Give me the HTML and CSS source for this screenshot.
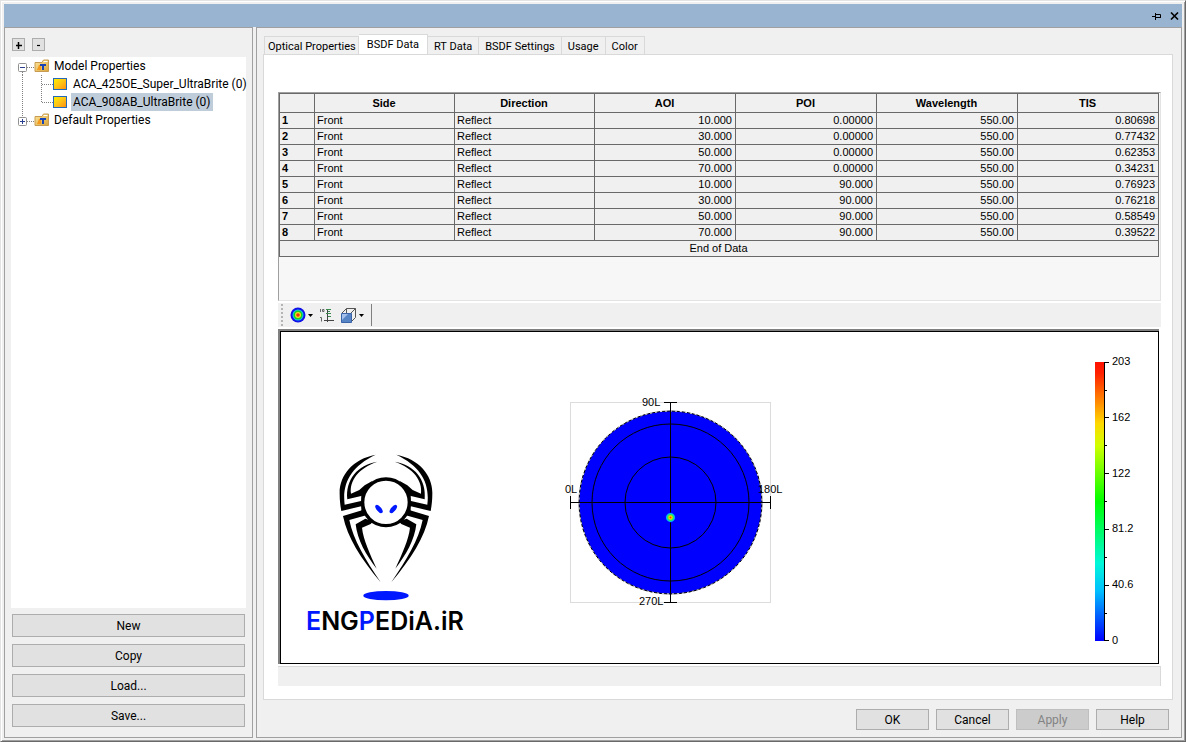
FILE: index.html
```html
<!DOCTYPE html>
<html lang="en">
<head>
<meta charset="utf-8">
<title>Property Editor</title>
<link rel="stylesheet" href="styles.css">
</head>
<body>
<svg class="defs" aria-hidden="true">
  <defs>
    <linearGradient id="gold" x1="0" y1="0" x2="1" y2="1"><stop offset="0" stop-color="#fff200"/><stop offset=".5" stop-color="#ffc414"/><stop offset="1" stop-color="#ff8c10"/></linearGradient>
    <linearGradient id="folderFill" x1="0" y1="0" x2="1" y2="1"><stop offset="0" stop-color="#ffe9a0"/><stop offset="1" stop-color="#d9a43a"/></linearGradient>
    <symbol id="folder" viewBox="0 0 16 14">
      <path d="M1 3.500H8L9.500 1H14.500V12.500H1Z" fill="url(#folderFill)" stroke="#c79c50"/>
      <path d="M9.500 2.500h4" stroke="#fff" stroke-width="1"/>
      <path d="M3 11L5 6H7V11Z" fill="#f39a1c"/>
      <path d="M6 6H12M9 6V11" stroke="#1743b4" stroke-width="2" fill="none"/>
    </symbol>
    <symbol id="material" viewBox="0 0 14 12"><rect x=".5" y=".5" width="13" height="11" fill="url(#gold)" stroke="#2468b8"/></symbol>
  </defs>
</svg>
<div class="window">
  <header class="titlebar">
    <button class="caption" aria-label="Pin"><svg width="10" height="8" viewBox="0 0 10 8"><path d="M0 4.500H3M3.500 1V8M4 2.500H8.500V6M4 5.500H9" stroke="#000" fill="none"/></svg></button>
    <button class="caption" aria-label="Close"><svg width="9" height="8" viewBox="0 0 9 8"><path d="M1 .5L8 7.500M8 .5L1 7.500" stroke="#000" stroke-width="1.600"/></svg></button>
  </header>
  <div class="panes">
    <aside class="sidebar">
      <div class="expand">
        <button aria-label="Expand all"><svg width="11" height="11" viewBox="0 0 11 11"><path d="M3 6.500H9M5.500 3V10" stroke="#000" stroke-width="1.500" fill="none"/></svg></button>
        <button aria-label="Collapse all"><svg width="11" height="11" viewBox="0 0 11 11"><path d="M4 6.500H7" stroke="#000" stroke-width="1.200"/></svg></button>
      </div>
      <ul class="tree">
        <li class="root">
          <svg class="branch" width="16" height="18"><path d="M4.500 15V18M9 10.500H16" class="dots"/><rect x=".5" y="6.500" width="8" height="8" rx="1" class="box"/><path d="M2 10.500H7" stroke="#2b3f8f"/></svg>
          <svg width="16" height="14"><use href="#folder"/></svg><span class="label">Model Properties</span>
        </li>
        <li class="leaf">
          <svg class="branch" width="35" height="18"><path d="M4.500 0V18M23.500 0V18M24 9.500H35" class="dots"/></svg>
          <svg width="14" height="12"><use href="#material"/></svg><span class="label">ACA_425OE_Super_UltraBrite (0)</span>
        </li>
        <li class="leaf">
          <svg class="branch" width="35" height="18"><path d="M4.500 0V18M23.500 0V10M24 9.500H35" class="dots"/></svg>
          <svg width="14" height="12"><use href="#material"/></svg><span class="label selected">ACA_908AB_UltraBrite (0)</span>
        </li>
        <li class="root">
          <svg class="branch" width="16" height="18"><path d="M4.500 0V6M9 10.500H16" class="dots"/><rect x=".5" y="6.500" width="8" height="8" rx="1" class="box"/><path d="M2 10.500H7M4.500 8V13" stroke="#2b3f8f"/></svg>
          <svg width="16" height="14"><use href="#folder"/></svg><span class="label">Default Properties</span>
        </li>
      </ul>
      <div class="actions">
        <button class="btn">New</button>
        <button class="btn">Copy</button>
        <button class="btn">Load...</button>
        <button class="btn">Save...</button>
      </div>
    </aside>
    <main class="editor">
      <nav class="tabs" role="tablist">
        <button class="tab" role="tab">Optical Properties</button>
        <button class="tab active" role="tab" aria-selected="true">BSDF Data</button>
        <button class="tab" role="tab">RT Data</button>
        <button class="tab" role="tab">BSDF Settings</button>
        <button class="tab" role="tab">Usage</button>
        <button class="tab" role="tab">Color</button>
      </nav>
      <section class="page">
        <div class="grid">
          <table>
            <thead><tr><th class="num"></th><th class="txt">Side</th><th class="txt">Direction</th><th>AOI</th><th>POI</th><th>Wavelength</th><th>TIS</th></tr></thead>
            <tbody>
              <tr><th>1</th><td>Front</td><td>Reflect</td><td>10.000</td><td>0.00000</td><td>550.00</td><td>0.80698</td></tr>
              <tr><th>2</th><td>Front</td><td>Reflect</td><td>30.000</td><td>0.00000</td><td>550.00</td><td>0.77432</td></tr>
              <tr><th>3</th><td>Front</td><td>Reflect</td><td>50.000</td><td>0.00000</td><td>550.00</td><td>0.62353</td></tr>
              <tr><th>4</th><td>Front</td><td>Reflect</td><td>70.000</td><td>0.00000</td><td>550.00</td><td>0.34231</td></tr>
              <tr><th>5</th><td>Front</td><td>Reflect</td><td>10.000</td><td>90.000</td><td>550.00</td><td>0.76923</td></tr>
              <tr><th>6</th><td>Front</td><td>Reflect</td><td>30.000</td><td>90.000</td><td>550.00</td><td>0.76218</td></tr>
              <tr><th>7</th><td>Front</td><td>Reflect</td><td>50.000</td><td>90.000</td><td>550.00</td><td>0.58549</td></tr>
              <tr><th>8</th><td>Front</td><td>Reflect</td><td>70.000</td><td>90.000</td><td>550.00</td><td>0.39522</td></tr>
              <tr><td class="end" colspan="7">End of Data</td></tr>
            </tbody>
          </table>
        </div>
        <div class="toolbar">
          <svg class="grip" width="2" height="22"><path d="M1 0V22" stroke="#b4b4b4" stroke-width="2" stroke-dasharray="2 2"/></svg>
          <button aria-label="Color map"><svg width="16" height="16" viewBox="0 0 16 16"><circle cx="8" cy="8" r="7.500" fill="#1010e8"/><circle cx="8" cy="8" r="5.500" fill="#10c8f0"/><circle cx="8" cy="8" r="4.500" fill="#18d020"/><circle cx="8" cy="8" r="3" fill="#f0e020"/><circle cx="8" cy="8" r="1.800" fill="#f03010"/></svg><svg width="5" height="3"><path d="M0 0H5L2.500 3Z"/></svg></button>
          <button aria-label="Log scale"><svg width="14" height="15" viewBox="0 0 14 15"><path d="M0 9.500H1.500V13.500M.5 1V4M2.500 1.500H4V3.500H2.500Z" stroke="#666" fill="none"/><path d="M7.500 1V14M4 12.500H14" stroke="#444" fill="none"/><path d="M6 1.500H11M8 3.500H10M6 5.500H11M8 8.500H11" stroke="#3a8a50" fill="none"/></svg></button>
          <button aria-label="View"><svg width="16" height="15" viewBox="0 0 16 15"><path d="M1 5L5.500 .5H14.500V9.500L10 14M5.500 .5V5M10 5L14.500 .5" fill="none" stroke="#555"/><path d="M.5 5.500H10.500V14.500H.5Z" fill="#5784c4" stroke="#3a63a8"/><path d="M1 6H7L1 12Z" fill="#a4c0ea"/></svg><svg width="5" height="3"><path d="M0 0H5L2.500 3Z"/></svg></button>
          <span class="sep"></span>
        </div>
        <div class="canvas">
          <svg class="logo" width="190" height="300" viewBox="290 350 190 300">
            <g transform="translate(290 440) scale(.3333)">
              <g id="legs">
                <path d="M257 44C187 57 147 108 149 162C149 180 151 198 154 213L226 196V180L164 194C156 130 182 80 257 44Z"/>
                <path d="M262 65C202 74 166 120 172 178L226 165L248 122L224 136L208 150L183 161C178 122 205 85 262 65Z"/>
                <path d="M214 166H228V224H214Z"/>
                <path d="M159 228L226 208L234 224L178 240C190 300 226 358 272 427C212 355 172 292 159 228Z"/>
                <path d="M197 253L226 236L250 244L242 252L216 263C220 300 240 342 260 386C228 345 202 300 197 253Z"/>
              </g>
              <use href="#legs" transform="matrix(-1 0 0 1 576 0)"/>
              <circle cx="288" cy="187" r="70" fill="#fff" stroke="#000" stroke-width="10"/>
              <ellipse cx="267" cy="207" rx="15" ry="7" transform="rotate(50 267 207)" fill="#0018ff"/>
              <ellipse cx="310" cy="207" rx="15" ry="7" transform="rotate(-50 310 207)" fill="#0018ff"/>
              <ellipse cx="288" cy="467" rx="68" ry="14" fill="#0018ff"/>
            </g>
            <text class="brand" x="306" y="630"><tspan class="blue">E</tspan>NG<tspan class="blue">P</tspan>EDiA.iR</text>
          </svg>
          <svg class="polar" width="230" height="300" viewBox="560 350 230 300">
            <defs><radialGradient id="spot"><stop offset="0" stop-color="#ff3000"/><stop offset=".3" stop-color="#ffd000"/><stop offset=".55" stop-color="#30f040"/><stop offset=".8" stop-color="#00b0ff"/><stop offset="1" stop-color="#0010ff"/></radialGradient></defs>
            <rect x="570.500" y="402.500" width="200" height="200" fill="none" stroke="#dcdcdc"/>
            <circle cx="670.500" cy="502.500" r="91.500" fill="#0000ff" stroke="#000"/>
            <circle cx="670.500" cy="502.500" r="91.500" fill="none" stroke="#fff" stroke-dasharray="2 3"/>
            <g fill="none" stroke="#000"><circle cx="670.500" cy="502.500" r="78.500"/><circle cx="670.500" cy="502.500" r="45.500"/></g>
            <path d="M571 502.500H770M670.500 403V602M570.500 496V509M770.500 496V509M664 402.500H677M664 602.500H677" stroke="#000" fill="none"/>
            <circle cx="670.500" cy="517.500" r="5" fill="url(#spot)"/>
            <text x="642" y="406">90L</text><text x="639" y="605">270L</text><text x="565" y="493">0L</text><text x="758" y="493">180L</text>
          </svg>
          <svg class="legend" width="50" height="300" viewBox="1090 350 50 300">
            <defs><linearGradient id="scale" x1="0" y1="0" x2="0" y2="1"><stop offset="0" stop-color="#ff1000"/><stop offset=".04" stop-color="#ff2000"/><stop offset=".22" stop-color="#ffd800"/><stop offset=".3" stop-color="#d0ff00"/><stop offset=".5" stop-color="#00ff00"/><stop offset=".72" stop-color="#00f8d8"/><stop offset=".82" stop-color="#00c0ff"/><stop offset="1" stop-color="#0000ff"/></linearGradient></defs>
            <rect x="1095" y="362" width="9" height="279" fill="url(#scale)"/>
            <path d="M1104.500 362V641M1104 362.500H1109M1104 417.500H1109M1104 473.500H1109M1104 529.500H1109M1104 585.500H1109M1104 640.500H1109M1104 390.500H1107M1104 445.500H1107M1104 501.500H1107M1104 557.500H1107M1104 613.500H1107" stroke="#000" fill="none"/>
            <text x="1112" y="365">203</text><text x="1112" y="421">162</text><text x="1112" y="477">122</text><text x="1112" y="532">81.2</text><text x="1112" y="588">40.6</text><text x="1112" y="644">0</text>
          </svg>
        </div>
        <div class="status"></div>
      </section>
      <footer class="dialog">
        <button class="btn">OK</button>
        <button class="btn">Cancel</button>
        <button class="btn" disabled>Apply</button>
        <button class="btn">Help</button>
      </footer>
    </main>
  </div>
</div>
</body>
</html>
```
FILE: styles.css
```css
* { box-sizing: border-box; }
body { margin: 0; font: 12px/16px Roboto, "Liberation Sans", sans-serif; color: #000; }
button { font: inherit; color: inherit; padding: 0; border: 0; background: none; }
svg { display: block; flex: none; }
.defs { position: absolute; width: 0; height: 0; }

.window {
  display: flex; flex-direction: column; height: 100vh; min-height: 600px;
  padding: 3px 2px 2px 3px; background: #f0f0f0;
  border: 1px solid; border-color: #e3e3e3 #696969 #696969 #e3e3e3;
  box-shadow: inset 1px 1px #fff, inset -1px -1px #a0a0a0;
}
.titlebar {
  display: flex; flex: none; justify-content: flex-end; align-items: center; gap: 8px;
  height: 23px; margin-right: 1px; padding-right: 3px; background: #99b4d1;
}
.panes { display: flex; flex: 1; gap: 3px; min-height: 0; padding-right: 1px; padding-bottom: 1px; }
.sidebar, .editor { display: flex; flex-direction: column; border: 1px solid #a0a0a0; }
.sidebar { flex: none; width: 249px; padding: 10px 6px; }
.editor { flex: 1; min-width: 0; padding: 6px 8px 7px 6px; }

.expand { display: flex; gap: 7px; padding: 0 1px; }
.expand button { border: 1px solid #adadad; background: #e1e1e1; }

.tree { flex: 1; list-style: none; margin: 6px 0; padding: 0 0 0 7px; background: #fff; }
.tree li { display: flex; align-items: center; height: 18px; white-space: nowrap; }
.label { padding: 0 2px; margin-left: 2px; line-height: 18px; }
.leaf .label { margin-left: 4px; }
.selected { background: #bfcddb; }
.dots { fill: none; stroke: #808080; stroke-dasharray: 1 1; }
.box { fill: #fff; stroke: #919191; }

.actions { display: flex; flex-direction: column; gap: 7px; padding: 0 1px; }
.btn { height: 23px; border: 1px solid #adadad; background: #e1e1e1; }
.btn:disabled { border-color: #bfbfbf; background: #ccc; color: #838383; }

.tabs { display: flex; align-items: flex-end; height: 20px; padding-left: 1px; }
.tab { height: 18px; padding: 2px 6px 0; border: 1px solid #d9d9d9; border-width: 1px 1px 0 0; font-size: 11px; line-height: 15px; white-space: nowrap; }
.tab:first-child { border-left-width: 1px; padding: 2px 2px 0 3px; }
.tab.active { height: 21px; margin-bottom: -1px; padding: 0 8px 2px; background: #fff; }

.page { display: flex; flex: 1; flex-direction: column; min-height: 0; padding: 37px 11px 13px 14px; border: 1px solid #d9d9d9; background: #fff; }
.grid { flex: none; height: 209px; padding-right: 1px; border: 1px solid; border-color: #a0a0a0 #e3e3e3 #e3e3e3 #a0a0a0; background: #f7f7f7; }
table { width: 100%; table-layout: fixed; border-spacing: 0; border: 1px solid #696969; border-width: 1px 0 0 1px; background: #f0f0f0; font: 11px/15px "Liberation Sans", Arial, sans-serif; }
th, td { height: 16px; padding: 0 3px 0 2px; border: 1px solid #696969; border-width: 0 1px 1px 0; text-align: right; }
td:nth-child(2), td:nth-child(3), tbody th { text-align: left; }
thead th { height: 19px; text-align: center; }
.num { width: 35px; }
.txt { width: 140px; }
td.end { text-align: center; }

.toolbar { display: flex; flex: none; align-items: center; gap: 7px; height: 24px; margin: 2px 0; padding-left: 3px; background: #f0f0f0; }
.toolbar button { display: flex; align-items: center; gap: 2px; }
.sep { width: 1px; height: 22px; background: #808080; }

.canvas {
  display: flex; flex: 1; align-items: center; min-height: 0; margin: 0 2px 2px 0; padding: 5px 19px 0 10px;
  border: solid #808080; border-width: 2px 0 0 2px; box-shadow: inset 0 0 0 1px #000;
}
.polar { margin-left: 80px; }
.legend { margin-left: auto; }
.canvas text { font: 11px "Liberation Sans", Arial, sans-serif; }
.canvas .brand { font: 600 25px Inter, sans-serif; }
.blue { fill: #0018ff; }
.status { flex: none; height: 20px; border-top: 1px solid #d9d9d9; border-right: 1px solid #d9d9d9; background: #f0f0f0; }

.dialog { display: flex; justify-content: flex-end; gap: 7px; padding: 9px 4px 0 0; }
.dialog .btn { width: 73px; height: 21px; }
```
